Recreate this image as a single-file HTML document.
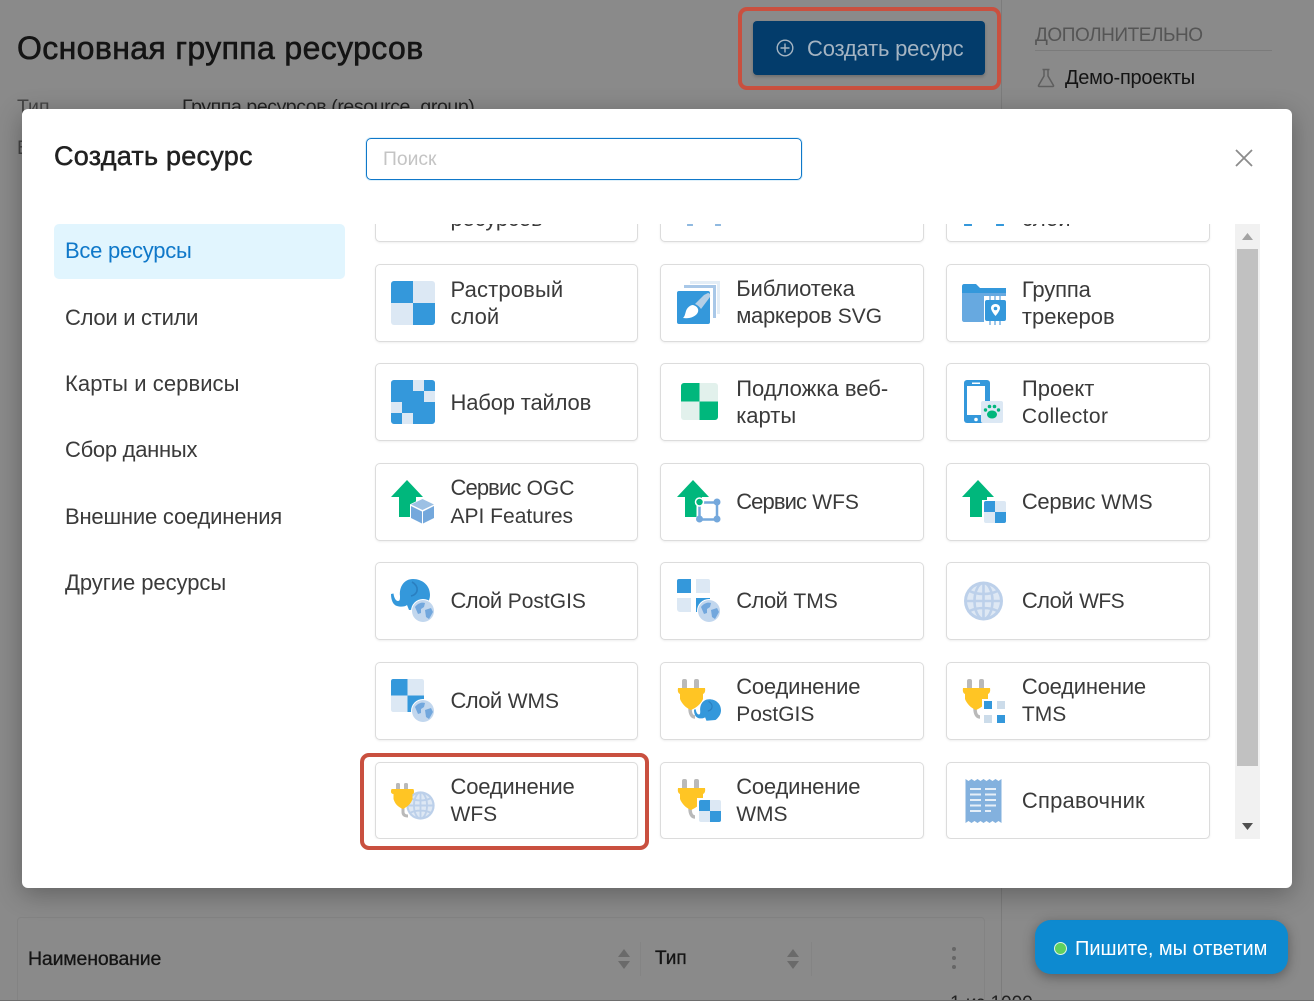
<!DOCTYPE html>
<html lang="ru">
<head>
<meta charset="utf-8">
<title>Создать ресурс</title>
<style>
html,body{margin:0;padding:0;width:1314px;height:1001px;overflow:hidden;background:#8a8a8a}
#root{position:relative;width:1314px;height:1001px;overflow:hidden;background:#8a8a8a;font-family:"Liberation Sans",sans-serif;color:#3a3a3a}
.a{position:absolute;white-space:nowrap}
#modal{position:absolute;left:22px;top:109px;width:1270px;height:779px;background:#fff;border-radius:6px;box-shadow:0 6px 26px rgba(0,0,0,.3)}
#clip{position:absolute;left:353px;top:224px;width:880px;height:615px;overflow:hidden}
.card{position:absolute;box-sizing:border-box;width:263.7px;height:77.5px;background:#fff;border:1px solid #dcdcdc;border-radius:5px;box-shadow:0 1px 2px rgba(0,0,0,.07)}
.card>svg{position:absolute;left:15.5px;top:16px;width:44px;height:44px}
.card>div{position:absolute;left:75px;top:.4px;height:75px;width:185px;display:flex;align-items:center;font-size:22px;line-height:27px;color:#3a3a3a}
.l{font-size:21px}
.s{letter-spacing:-.9px}
.c{letter-spacing:-.6px}
.o{letter-spacing:-.2px}
.nav{position:absolute;left:65px;font-size:22px;line-height:25px;letter-spacing:-.2px;color:#3a3a3a;white-space:nowrap}
</style>
</head>
<body>
<svg width="0" height="0" style="position:absolute">
<defs>
<symbol id="checker" viewBox="0 0 44 44"><rect width="44" height="44" rx="3" fill="#dce8f4"/><path d="M3 0H22V22H0V3A3 3 0 0 1 3 0Z" fill="#3498db"/><path d="M22 22H44V41A3 3 0 0 1 41 44H22Z" fill="#3498db"/></symbol>
<symbol id="globe" viewBox="0 0 24 24"><circle cx="12" cy="12" r="12" fill="#fff"/><circle cx="12" cy="12" r="11" fill="#c2d7ee"/><path d="M4 8C7 4 11 3 14 4L13 8 10 10 10 14 7 15ZM14 11L20 9 22 13 18 20 15 18Z" fill="#72a7dd"/></symbol>
<symbol id="wglobe" viewBox="0 0 40 40"><circle cx="20" cy="20" r="19.5" fill="#bcd0ea"/><circle cx="20" cy="20" r="16.5" fill="#dee8f4"/><g fill="none" stroke="#bcd0ea" stroke-width="2.6"><ellipse cx="20" cy="20" rx="9" ry="18"/><path d="M20 2V38M2 20H38M6 10C14 14 26 14 34 10M6 30C14 26 26 26 34 30"/></g></symbol>
<symbol id="arrow" viewBox="0 0 44 44"><path d="M16 0L32 17H25V37H8V17H0Z" fill="#00b77c"/></symbol>
<symbol id="plug" viewBox="0 0 30 44"><rect x="5" y="0" width="5" height="12" rx="2" fill="#b9b9b9"/><rect x="17" y="0" width="5" height="12" rx="2" fill="#b9b9b9"/><path d="M13 29C13 35 15 38 18 38" fill="none" stroke="#b9b9b9" stroke-width="3.5"/><path d="M1 9H28C28.500 12 28 14 26 15V20C24 25 19 29 14 31C9 29 5 25 3 20V15C1 14 .5 12 1 9Z" fill="#ffc524"/></symbol>
<symbol id="eleph" viewBox="0 0 39 31"><path d="M0 15L2.500 14.500C3 19 5 22 7 22C9 22 9 20 9 17C8 8 13 0 22 0C31 0 39 6 39 16C39 22 35 27 31 30L18 31L16 26C14 28 9 28 6 27C2 26 0 21 0 15Z" fill="#3498db"/><path d="M21 3C28 7 28 15 20 17" fill="none" stroke="#2a7fc0" stroke-width="1.600"/></symbol>
</defs>
</svg>
<div id="root">
<!-- background page -->
<div class="a" style="left:17px;top:30px;font-size:32px;line-height:36px;letter-spacing:.37px;color:#141414;-webkit-text-stroke:.6px #141414">Основная группа ресурсов</div>
<div class="a" style="left:738px;top:7px;width:263px;height:83px;box-sizing:border-box;border:4px solid #c9503f;border-radius:9px"></div>
<div class="a" style="left:753px;top:21px;width:232px;height:54px;background:#033c6b;border-radius:4px;box-shadow:0 2px 3px rgba(0,0,0,.2)"></div>
<svg class="a" style="left:776px;top:39px" width="18" height="18" viewBox="0 0 18 18" fill="none" stroke="#a5b4c2" stroke-width="1.400"><circle cx="9" cy="9" r="7.800"/><path d="M9 4.500V13.500M4.500 9H13.500"/></svg>
<div class="a" style="left:807px;top:35px;font-size:22px;line-height:27px;letter-spacing:-.2px;color:#a5b4c2">Создать ресурс</div>
<div class="a" style="left:1001px;top:0;width:1px;height:1001px;background:#7c7c7c"></div>
<div class="a" style="left:1035px;top:24px;font-size:19px;line-height:24px;letter-spacing:-.45px;color:#555">ДОПОЛНИТЕЛЬНО</div>
<div class="a" style="left:1035px;top:50px;width:237px;height:1px;background:#7b7b7b"></div>
<svg class="a" style="left:1036px;top:68px" width="20" height="20" viewBox="0 0 20 20" fill="none" stroke="#5e5e5e" stroke-width="1.500"><path d="M6.500 1.500H13.500M8 2V8L2.500 17.500C2.300 18 2.500 18.500 3 18.500H17C17.500 18.500 17.700 18 17.500 17.500L12 8V2"/></svg>
<div class="a" style="left:1065px;top:66px;font-size:20px;line-height:24px;letter-spacing:-.25px;color:#141414">Демо-проекты</div>
<div class="a" style="left:17px;top:95px;font-size:19.500px;line-height:24px;color:#444">Тип</div>
<div class="a" style="left:182px;top:95px;font-size:19.500px;line-height:24px;letter-spacing:-.4px;color:#222">Группа ресурсов (resource_group)</div>
<div class="a" style="left:17px;top:136px;font-size:19.500px;line-height:24px;color:#444">В</div>

<div class="a" style="left:17px;top:917px;width:968px;height:90px;box-sizing:border-box;border:1px solid #838383;border-radius:4px;background:#8a8a8a"></div>
<div class="a" style="left:28px;top:947px;font-size:19.500px;line-height:24px;letter-spacing:-.17px;color:#141414;-webkit-text-stroke:.3px #141414">Наименование</div>
<div class="a" style="left:655px;top:947px;font-size:19px;line-height:24px;color:#141414;-webkit-text-stroke:.3px #141414">Тип</div>
<div class="a" style="left:640px;top:942px;width:1px;height:34px;background:#848484"></div>
<div class="a" style="left:811px;top:942px;width:1px;height:34px;background:#848484"></div>
<svg class="a" style="left:617px;top:949px" width="14" height="20" viewBox="0 0 14 20" fill="#6a6a6a"><path d="M7 0L13 8H1ZM1 12H13L7 20Z"/></svg>
<svg class="a" style="left:786px;top:949px" width="14" height="20" viewBox="0 0 14 20" fill="#6a6a6a"><path d="M7 0L13 8H1ZM1 12H13L7 20Z"/></svg>
<svg class="a" style="left:951px;top:946px" width="6" height="24" viewBox="0 0 6 24" fill="#666"><circle cx="3" cy="3" r="2"/><circle cx="3" cy="12" r="2"/><circle cx="3" cy="21" r="2"/></svg>
<div class="a" style="left:950px;top:992px;font-size:19px;line-height:24px;color:#222">1 из 1000</div>
<div class="a" style="left:0;top:1000px;width:1314px;height:1px;background:#6e6e6e"></div>

<div class="a" style="left:1035px;top:920px;width:253px;height:54px;background:#0d8ad0;border-radius:16px;box-shadow:0 3px 12px rgba(0,0,0,.35)"></div>
<div class="a" style="left:1053.500px;top:941.500px;width:13px;height:13px;box-sizing:border-box;border-radius:50%;background:#5fd05f;border:1.500px solid #dff5e2"></div>
<div class="a" style="left:1075px;top:936px;font-size:20px;line-height:26px;color:#fff">Пишите, мы ответим</div>

<!-- modal -->
<div id="modal"></div>
<div class="a" style="left:54px;top:139px;font-size:27px;line-height:34px;letter-spacing:.24px;color:#212121;-webkit-text-stroke:.5px #212121">Создать ресурс</div>
<div class="a" style="left:366px;top:138px;width:436px;height:42px;box-sizing:border-box;border:1px solid #0f78c9;border-radius:5px;background:#fff;box-shadow:0 0 0 1px #dff1fb"></div>
<div class="a" style="left:383px;top:148px;font-size:19.300px;line-height:24px;color:#c4c4c4">Поиск</div>
<svg class="a" style="left:1234px;top:148px" width="20" height="20" viewBox="0 0 20 20" fill="none" stroke="#8c8c8c" stroke-width="1.800"><path d="M2 2L18 18M18 2L2 18"/></svg>

<div class="a" style="left:54px;top:224px;width:291px;height:55px;background:#e1f5fe;border-radius:5px"></div>
<div class="nav" style="top:238px;color:#0f78c9;letter-spacing:-.25px">Все ресурсы</div>
<div class="nav" style="top:305px;letter-spacing:-.28px">Слои и стили</div>
<div class="nav" style="top:371px;letter-spacing:.07px">Карты и сервисы</div>
<div class="nav" style="top:437px;letter-spacing:-.28px">Сбор данных</div>
<div class="nav" style="top:504px">Внешние соединения</div>
<div class="nav" style="top:570px;letter-spacing:-.05px">Другие ресурсы</div>

<div id="clip">
  <!-- partial top row -->
  <div class="card" style="left:21.500px;top:-59.500px"><div style="top:2px"><span>Группа<br><span class="o">ресурсов</span></span></div></div>
  <div class="card" style="left:307.200px;top:-59.500px"><svg viewBox="0 0 44 44"><circle cx="13" cy="43" r="3" fill="#8fb9e0"/><circle cx="41" cy="43" r="3" fill="#8fb9e0"/></svg></div>
  <div class="card" style="left:592.900px;top:-59.500px"><svg viewBox="0 0 44 44"><circle cx="6" cy="43" r="4" fill="#3498db"/><circle cx="38" cy="43" r="4" fill="#3498db"/></svg><div style="top:2px">Векторный<br>слой</div></div>

  <!-- row 1 -->
  <div class="card" style="left:21.500px;top:40px"><svg viewBox="0 0 44 44"><use href="#checker"/></svg><div><span><span style="letter-spacing:.15px">Растровый</span><br>слой</span></div></div>
  <div class="card" style="left:307.200px;top:40px"><svg viewBox="0 0 44 44"><path d="M13 0H43V33H40V3H13Z" fill="#e3edf6"/><path d="M7 4H39V37H36V7H7Z" fill="#a9c8e8"/><rect x="0" y="10" width="33" height="33" rx="2" fill="#3498db"/><path d="M31 12C33 12 33.500 14 33 16L24 28C22 25 20 24 18 23L27 14Z" fill="#b5cfe6"/><path d="M16 24C20 25 22 28 21 31C19 36 12 38 6 37C8 35 8 33 9 30C10 27 13 24 16 24Z" fill="#fff"/></svg><div><span><span style="letter-spacing:-.1px">Библиотека</span><br><span style="letter-spacing:-.3px">маркеров</span> <span class="l">SVG</span></span></div></div>
  <div class="card" style="left:592.900px;top:40px"><svg viewBox="0 0 44 44"><path d="M0 5C0 4 1 3 2 3H14L18 7H44V12H0Z" fill="#3498db"/><path d="M0 12H44V39C44 40 43 41 42 41H2C1 41 0 40 0 39Z" fill="#67a9e0"/><rect x="22" y="15" width="22" height="31" fill="#fff"/><rect x="23" y="19" width="21" height="21" rx="2" fill="#3498db"/><path d="M28 15V19M33 15V19M38 15V19M28 40V44M33 40V44M38 40V44" stroke="#9cc6ea" stroke-width="2"/><path d="M33.500 23C30.500 23 29 25 29 27C29 30 33.500 35 33.500 35S38 30 38 27C38 25 36.500 23 33.500 23Z" fill="#fff"/><circle cx="33.500" cy="27.500" r="1.800" fill="#3498db"/></svg><div><span><span style="letter-spacing:-.15px">Группа</span><br>трекеров</span></div></div>

  <!-- row 2 -->
  <div class="card" style="left:21.500px;top:139.400px"><svg viewBox="0 0 44 44"><rect width="44" height="44" rx="3" fill="#dce8f4"/><path d="M3 0H22V22H0V3A3 3 0 0 1 3 0ZM33 0H41A3 3 0 0 1 44 3V11H33ZM22 11H33V22H22ZM11 22H22V33H11ZM0 33H11V44H3A3 3 0 0 1 0 41ZM22 22H44V41A3 3 0 0 1 41 44H22Z" fill="#3498db"/></svg><div><span style="letter-spacing:-.17px">Набор тайлов</span></div></div>
  <div class="card" style="left:307.200px;top:139.400px"><svg viewBox="0 0 44 44"><rect x="4" y="3" width="37" height="37" rx="3" fill="#e2f1ec"/><path d="M7 3H22.500V21.500H4V6A3 3 0 0 1 7 3ZM22.500 21.500H41V37A3 3 0 0 1 38 40H22.500Z" fill="#00b77c"/></svg><div>Подложка веб-<br>карты</div></div>
  <div class="card" style="left:592.900px;top:139.400px"><svg viewBox="0 0 44 44"><rect x="2" y="0" width="26" height="43" rx="3" fill="#3498db"/><rect x="5" y="6" width="18" height="29" fill="#fff"/><rect x="10" y="2.500" width="8" height="1.500" fill="#fff"/><circle cx="14" cy="39.500" r="1.800" fill="#fff"/><rect x="19" y="21" width="22" height="22" rx="2" fill="#dce8f4"/><g fill="#00b77c"><ellipse cx="30" cy="34.500" rx="5" ry="4"/><circle cx="23.500" cy="30" r="1.700"/><circle cx="27.500" cy="26.500" r="1.800"/><circle cx="32.500" cy="26.500" r="1.800"/><circle cx="36.500" cy="30" r="1.700"/></g></svg><div><span>Проект<br><span class="l" style="letter-spacing:.4px">Collector</span></span></div></div>

  <!-- row 3 -->
  <div class="card" style="left:21.500px;top:239px"><svg viewBox="0 0 44 44"><use href="#arrow"/><path d="M32 19L43 25V38L32 44 20 38V25Z" fill="#fff" stroke="#fff" stroke-width="2"/><path d="M31.500 19L43 24.500 31.500 30 20 24.500Z" fill="#9cc0e4"/><path d="M20 26L31 31.500V43.500L20 38ZM32 31.500L43 26V38L32 43.500Z" fill="#74a8dc"/></svg><div><span><span class="s">Сервис</span> <span class="l">OGC</span><br><span class="l">API Features</span></span></div></div>
  <div class="card" style="left:307.200px;top:239px"><svg viewBox="0 0 44 44"><use href="#arrow"/><path d="M22 22H40V39H22Z" fill="#fff" stroke="#fff" stroke-width="5"/><rect x="22.500" y="22.500" width="17.500" height="17" fill="none" stroke="#74a8dc" stroke-width="2.500"/><circle cx="40" cy="22" r="3.500" fill="#74a8dc"/><circle cx="22.500" cy="39" r="3.500" fill="#74a8dc"/><circle cx="40" cy="39" r="3.500" fill="#74a8dc"/><circle cx="22.500" cy="22" r="4" fill="#00b77c" stroke="#fff" stroke-width="1.500"/></svg><div><span><span class="s">Сервис</span> <span class="l">WFS</span></span></div></div>
  <div class="card" style="left:592.900px;top:239px"><svg viewBox="0 0 44 44"><use href="#arrow"/><rect x="20" y="20" width="25" height="25" fill="#fff"/><rect x="22" y="21" width="22" height="22" rx="2" fill="#dce8f4"/><path d="M22 23A2 2 0 0 1 24 21H33V32H22ZM33 32H44V41A2 2 0 0 1 42 43H33Z" fill="#3498db"/></svg><div><span><span class="s" style="letter-spacing:-.35px">Сервис</span> <span class="l">WMS</span></span></div></div>

  <!-- row 4 -->
  <div class="card" style="left:21.500px;top:338.400px"><svg viewBox="0 0 44 44"><use href="#eleph" x="0" y="0" width="39" height="31"/><use href="#globe" x="20" y="20" width="24" height="24"/></svg><div><span><span class="c">Слой</span> <span class="l">PostGIS</span></span></div></div>
  <div class="card" style="left:307.200px;top:338.400px"><svg viewBox="0 0 44 44"><path d="M2 0H14V14H0V2A2 2 0 0 1 2 0Z" fill="#3498db"/><path d="M19 0H31A2 2 0 0 1 33 2V14H19ZM0 19H14V33H3A3 3 0 0 1 0 30Z" fill="#dce8f4"/><rect x="19" y="19" width="14" height="14" fill="#3498db"/><use href="#globe" x="20" y="20" width="24" height="24"/></svg><div><span><span class="c">Слой</span> <span class="l">TMS</span></span></div></div>
  <div class="card" style="left:592.900px;top:338.400px"><svg viewBox="0 0 44 44"><use href="#wglobe" x="1.500" y="2" width="40" height="40"/></svg><div><span><span class="c">Слой</span> <span class="l" style="letter-spacing:-.6px">WFS</span></span></div></div>

  <!-- row 5 -->
  <div class="card" style="left:21.500px;top:438px"><svg viewBox="0 0 44 44"><use href="#checker" x="0" y="0" width="33" height="33"/><use href="#globe" x="20" y="20" width="24" height="24"/></svg><div><span><span class="c">Слой</span> <span class="l">WMS</span></span></div></div>
  <div class="card" style="left:307.200px;top:438px"><svg viewBox="0 0 44 44"><use href="#plug" x="0" y="0" width="30" height="44"/><use href="#eleph" x="17" y="19" width="27" height="24"/></svg><div><span><span class="o">Соединение</span><br><span class="l">PostGIS</span></span></div></div>
  <div class="card" style="left:592.900px;top:438px"><svg viewBox="0 0 44 44"><use href="#plug" x="0" y="0" width="30" height="44"/><rect x="20" y="20" width="25" height="25" fill="#fff"/><rect x="22" y="22" width="8" height="8" fill="#3498db"/><rect x="35" y="22" width="8" height="8" fill="#ccdcea"/><rect x="22" y="36" width="8" height="8" fill="#ccdcea"/><rect x="35" y="36" width="8" height="8" fill="#3498db"/></svg><div><span><span class="o">Соединение</span><br><span class="l">TMS</span></span></div></div>

  <!-- row 6 -->
  <div class="card" style="left:21.500px;top:537.500px"><svg viewBox="0 0 44 44"><use href="#wglobe" x="15" y="12" width="29" height="29"/><rect x="5" y="4" width="4" height="8" rx="1.500" fill="#b9b9b9"/><rect x="13" y="4" width="4" height="8" rx="1.500" fill="#b9b9b9"/><path d="M12 27V33C12 36 14 37 17 37" fill="none" stroke="#b9b9b9" stroke-width="3"/><path d="M1 10H22C23 10 23 12 23 13C23 14 22.500 15 21.500 15V20C20 25 16 28 12 30C7 28 4 25 2.500 20V15C1 15 0 14 0 13C0 12 0 10 1 10Z" fill="#ffc524"/></svg><div><span><span class="o">Соединение</span><br><span class="l">WFS</span></span></div></div>
  <div class="card" style="left:307.200px;top:537.500px"><svg viewBox="0 0 44 44"><use href="#plug" x="0" y="0" width="30" height="44"/><rect x="20" y="19" width="25" height="26" fill="#fff"/><rect x="22" y="21" width="22" height="22" rx="2" fill="#dce8f4"/><path d="M22 23A2 2 0 0 1 24 21H33V32H22ZM33 32H44V41A2 2 0 0 1 42 43H33Z" fill="#3498db"/></svg><div><span><span class="o">Соединение</span><br><span class="l">WMS</span></span></div></div>
  <div class="card" style="left:592.900px;top:537.500px"><svg viewBox="0 0 44 44"><path d="M3 0L6 2 9 0 12 2 15 0 18 2 21 0 24 2 27 0 30 2 33 0 36 2 39 0V44L36 42 33 44 30 42 27 44 24 42 21 44 18 42 15 44 12 42 9 44 6 42 3 44Z" fill="#83b1de" transform="translate(.5,0)"/><path d="M8 10H19M23 10H34M8 15.500H19M23 15.500H34M8 21H19M23 21H34M8 26.500H19M23 26.500H34M8 32H19M23 32H29" stroke="#fff" stroke-width="2" opacity=".8"/></svg><div><span style="letter-spacing:.2px">Справочник</span></div></div>
</div>

<!-- scrollbar -->
<div class="a" style="left:1235px;top:224px;width:25px;height:615px;background:#f1f1f1"></div>
<div class="a" style="left:1237px;top:249px;width:21px;height:517px;background:#c1c1c1"></div>
<svg class="a" style="left:1241px;top:232px" width="13" height="9" viewBox="0 0 13 9"><path d="M6.500 1L12 8H1Z" fill="#a3a3a3"/></svg>
<svg class="a" style="left:1241px;top:822px" width="13" height="9" viewBox="0 0 13 9"><path d="M1 1H12L6.500 8Z" fill="#505050"/></svg>

<!-- red highlight -->
<div class="a" style="left:360px;top:753px;width:289px;height:97px;box-sizing:border-box;border:4px solid #c9503f;border-radius:9px"></div>
</div>
</body>
</html>
